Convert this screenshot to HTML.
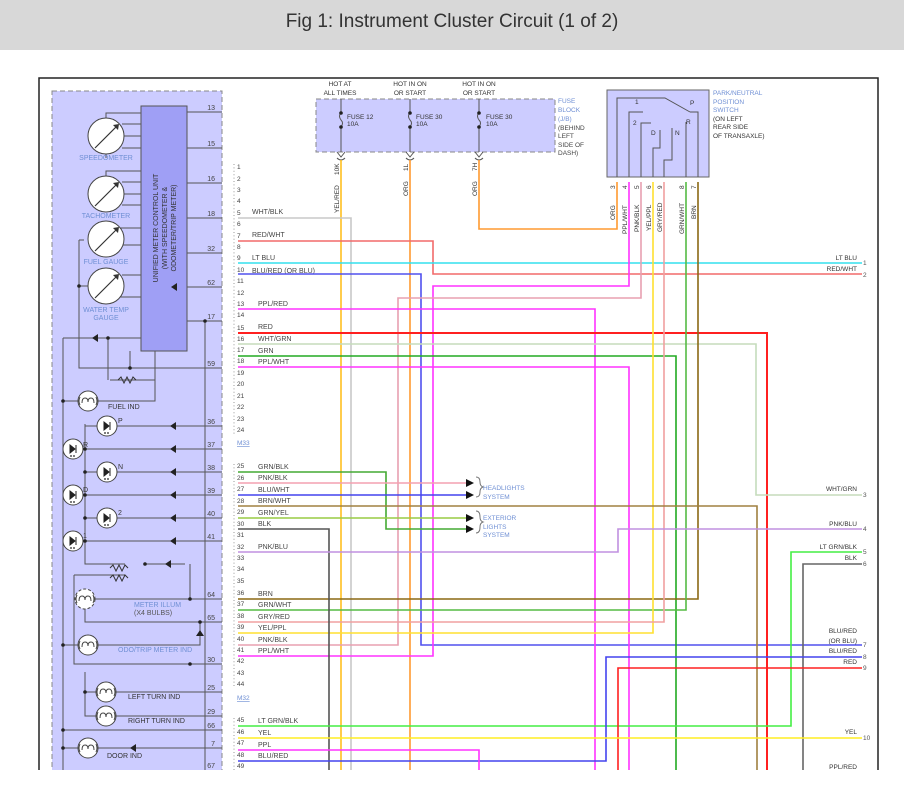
<!DOCTYPE html>
<html><head><meta charset="utf-8">
<style>
html,body{margin:0;padding:0;background:#fff;width:904px;height:797px;overflow:hidden}
.hdr{position:absolute;left:0;top:0;width:904px;height:50px;background:#d8d8d8;font:19px "Liberation Sans",sans-serif;color:#333;text-align:center;line-height:44px}
svg{position:absolute;left:0;top:0}
text{font-family:"Liberation Sans",sans-serif}
</style></head><body>
<div class="hdr">Fig 1: Instrument Cluster Circuit (1 of 2)</div>
<svg width="904" height="797" viewBox="0 0 904 797">
<defs><clipPath id="c"><rect x="0" y="0" width="904" height="770"/></clipPath></defs>
<g clip-path="url(#c)">
<path d="M39 770 V78 H878 V770" fill="none" stroke="#222" stroke-width="1.5"/>
<rect x="52" y="91" width="170" height="700" fill="#ccccff" stroke="#888" stroke-dasharray="5,3"/>
<rect x="141" y="106" width="46" height="245" fill="#9f9ff5" stroke="#555"/>
<text transform="translate(158,228) rotate(-90)" font-size="7" fill="#333" text-anchor="middle">UNIFIED METER CONTROL UNIT</text>
<text transform="translate(167,228) rotate(-90)" font-size="7" fill="#333" text-anchor="middle">(WITH SPEEDOMETER &amp;</text>
<text transform="translate(176,228) rotate(-90)" font-size="7" fill="#333" text-anchor="middle">ODOMETER/TRIP METER)</text>
<g stroke="#555" fill="none" stroke-width="1">
<path d="M187 112 H222 M187 148 H222 M187 183 H222 M187 218 H222 M187 253 H222 M187 287 H222 M187 321 H222 M187 368 H222"/>
<path d="M106 118 V113 H141 M122 124 H141 M124 136 H141 M122 148 H141 M106 154 V158"/>
<path d="M106 176 V171 H141 M122 182 H141 M124 194 H141 M122 205 H141 M110 228 H141 M122 245 H141 M122 275 H141 M110 297 H141"/>
<path d="M79 240 H84 M79 240 V368 H222 M79 286 H88"/>
<path d="M130 351 V368 M155 351 V380 H110 M205 321 V770 M63 338 H141 M63 338 V770"/>
<path d="M108 338 V380"/>
</g>
<g fill="#fff" stroke="#444"><circle cx="106" cy="136" r="18"/><circle cx="106" cy="194" r="18"/><circle cx="106" cy="239" r="18"/><circle cx="106" cy="286" r="18"/></g>
<g stroke="#333" stroke-width="1.2"><path d="M95 148 L117 126 M95 206 L117 184 M95 251 L117 229 M95 298 L117 276"/></g>
<g fill="#333"><path d="M119 124 l-6 1 5 5z M119 182 l-6 1 5 5z M119 227 l-6 1 5 5z M119 274 l-6 1 5 5z"/></g>
<g font-size="7" fill="#6f8fd4" text-anchor="middle"><text x="106" y="160">SPEEDOMETER</text><text x="106" y="218">TACHOMETER</text><text x="106" y="264">FUEL GAUGE</text><text x="106" y="312">WATER TEMP</text><text x="106" y="320">GAUGE</text></g>
<g stroke="#555" fill="none">
<path d="M63 401 H78 M98 401 H155 V380 M85 424 V564 H125 M85 426 H222 M85 449 H222 M85 472 H222 M85 495 H222 M85 518 H222 M85 541 H222"/>
<path d="M74 575 H125 M74 575 V664 H190 M190 564 V599 H222 M145 564 H185 M85 599 H222 M85 599 V622 H222 M200 622 V645 H98 M63 645 H78 M190 664 H222 M85 672 V716 H222 M85 692 H222 M63 730 H222 M63 748 H78 M98 748 H222"/>
</g>
<g fill="#fff" stroke="#444"><circle cx="88" cy="401" r="10"/><circle cx="107" cy="426" r="10"/><circle cx="73" cy="449" r="10"/><circle cx="107" cy="472" r="10"/><circle cx="73" cy="495" r="10"/><circle cx="107" cy="518" r="10"/><circle cx="73" cy="541" r="10"/><circle cx="85" cy="599" r="10" stroke-dasharray="3,2"/><circle cx="88" cy="645" r="10"/><circle cx="106" cy="692" r="10"/><circle cx="106" cy="716" r="10"/><circle cx="88" cy="748" r="10"/></g>
<!-- LED glyphs -->
<g fill="#222" stroke="#222">
<path d="M104 422 l5 4 -5 4z M110 422 v8 M70 445 l5 4 -5 4z M76 445 v8 M104 468 l5 4 -5 4z M110 468 v8 M70 491 l5 4 -5 4z M76 491 v8 M104 514 l5 4 -5 4z M110 514 v8 M70 537 l5 4 -5 4z M76 537 v8" stroke-width="1"/>
</g>
<g fill="#222"><circle cx="105" cy="433" r="0.9"/><circle cx="108" cy="433" r="0.9"/><circle cx="71" cy="456" r="0.9"/><circle cx="74" cy="456" r="0.9"/><circle cx="105" cy="479" r="0.9"/><circle cx="108" cy="479" r="0.9"/><circle cx="71" cy="502" r="0.9"/><circle cx="74" cy="502" r="0.9"/><circle cx="105" cy="525" r="0.9"/><circle cx="108" cy="525" r="0.9"/><circle cx="71" cy="548" r="0.9"/><circle cx="74" cy="548" r="0.9"/></g>
<!-- bulb filaments -->
<g stroke="#444" fill="none">
<path d="M82 403 q0 -5 3 -5 q3 0 3 4 q0 -4 3 -4 q3 0 3 5 M80 397 q-2 4 0 8 M96 397 q2 4 0 8"/>
<path d="M79 601 q0 -5 3 -5 q3 0 3 4 q0 -4 3 -4 q3 0 3 5 M77 595 q-2 4 0 8 M93 595 q2 4 0 8"/>
<path d="M82 647 q0 -5 3 -5 q3 0 3 4 q0 -4 3 -4 q3 0 3 5 M80 641 q-2 4 0 8 M96 641 q2 4 0 8"/>
<path d="M100 694 q0 -5 3 -5 q3 0 3 4 q0 -4 3 -4 q3 0 3 5 M98 688 q-2 4 0 8 M114 688 q2 4 0 8"/>
<path d="M100 718 q0 -5 3 -5 q3 0 3 4 q0 -4 3 -4 q3 0 3 5 M98 712 q-2 4 0 8 M114 712 q2 4 0 8"/>
<path d="M82 750 q0 -5 3 -5 q3 0 3 4 q0 -4 3 -4 q3 0 3 5 M80 744 q-2 4 0 8 M96 744 q2 4 0 8"/>
</g>
<g fill="#222"><path d="M170 426 l6 -4 v8z M170 449 l6 -4 v8z M170 472 l6 -4 v8z M170 495 l6 -4 v8z M170 518 l6 -4 v8z M170 541 l6 -4 v8z M171 287 l6 -4 v8z M92 338 l6 -4 v8z M165 564 l6 -4 v8z M200 630 l-4 6 h8z M130 748 l6 -4 v8z"/>
<circle cx="63" cy="401" r="1.8"/><circle cx="85" cy="449" r="1.8"/><circle cx="85" cy="472" r="1.8"/><circle cx="85" cy="495" r="1.8"/><circle cx="85" cy="518" r="1.8"/><circle cx="85" cy="541" r="1.8"/><circle cx="145" cy="564" r="1.8"/><circle cx="190" cy="599" r="1.8"/><circle cx="200" cy="622" r="1.8"/><circle cx="63" cy="645" r="1.8"/><circle cx="190" cy="664" r="1.8"/><circle cx="85" cy="692" r="1.8"/><circle cx="63" cy="730" r="1.8"/><circle cx="63" cy="748" r="1.8"/><circle cx="79" cy="286" r="1.8"/><circle cx="108" cy="338" r="1.8"/><circle cx="130" cy="368" r="1.8"/><circle cx="205" cy="321" r="1.8"/></g>
<path d="M110 568 l3 -3 3 6 3 -6 3 6 3 -6 3 3 M110 578 l3 -3 3 6 3 -6 3 6 3 -6 3 3 M118 380 l3 -3 3 6 3 -6 3 6 3 -6 3 3" stroke="#333" fill="none"/>
<g font-size="7" fill="#333"><text x="108" y="409">FUEL IND</text><text x="118" y="423">P</text><text x="83" y="447">R</text><text x="118" y="469">N</text><text x="83" y="492">D</text><text x="118" y="515">2</text><text x="83" y="538">1</text><text x="128" y="699">LEFT TURN IND</text><text x="128" y="723">RIGHT TURN IND</text><text x="107" y="758">DOOR IND</text></g>
<g font-size="7" fill="#6f8fd4"><text x="134" y="607">METER ILLUM</text><text x="134" y="615" fill="#555">(X4 BULBS)</text><text x="118" y="652">ODO/TRIP METER IND</text></g>
<g font-size="7" fill="#444" text-anchor="end"><text x="215" y="110">13</text><text x="215" y="146">15</text><text x="215" y="181">16</text><text x="215" y="216">18</text><text x="215" y="251">32</text><text x="215" y="285">62</text><text x="215" y="319">17</text><text x="215" y="366">59</text><text x="215" y="424">36</text><text x="215" y="447">37</text><text x="215" y="470">38</text><text x="215" y="493">39</text><text x="215" y="516">40</text><text x="215" y="539">41</text><text x="215" y="597">64</text><text x="215" y="620">65</text><text x="215" y="662">30</text><text x="215" y="690">25</text><text x="215" y="714">29</text><text x="215" y="728">66</text><text x="215" y="746">7</text><text x="215" y="768">67</text></g>
<g font-size="6.5" fill="#444">
<text x="237" y="169">1</text><text x="237" y="181">2</text><text x="237" y="192">3</text><text x="237" y="203">4</text><text x="237" y="215">5</text><text x="237" y="226">6</text><text x="237" y="238">7</text><text x="237" y="249">8</text><text x="237" y="260">9</text><text x="237" y="272">10</text><text x="237" y="283">11</text><text x="237" y="295">12</text><text x="237" y="306">13</text><text x="237" y="317">14</text><text x="237" y="330">15</text><text x="237" y="341">16</text><text x="237" y="352">17</text><text x="237" y="363">18</text><text x="237" y="375">19</text><text x="237" y="386">20</text><text x="237" y="398">21</text><text x="237" y="409">22</text><text x="237" y="421">23</text><text x="237" y="432">24</text>
<text x="237" y="468">25</text><text x="237" y="480">26</text><text x="237" y="491">27</text><text x="237" y="503">28</text><text x="237" y="514">29</text><text x="237" y="526">30</text><text x="237" y="537">31</text><text x="237" y="549">32</text><text x="237" y="560">33</text><text x="237" y="571">34</text><text x="237" y="583">35</text><text x="237" y="595">36</text><text x="237" y="606">37</text><text x="237" y="618">38</text><text x="237" y="629">39</text><text x="237" y="641">40</text><text x="237" y="652">41</text><text x="237" y="663">42</text><text x="237" y="675">43</text><text x="237" y="686">44</text>
<text x="237" y="722">45</text><text x="237" y="734">46</text><text x="237" y="745">47</text><text x="237" y="757">48</text><text x="237" y="768">49</text>
</g>
<g font-size="6.5" fill="#6f8fd4" text-decoration="underline"><text x="237" y="445">M33</text><text x="237" y="700">M32</text></g>
<path d="M234 164 V434 M234 464 V688 M234 718 V770" stroke="#999" stroke-dasharray="1,2.4"/>
<g font-size="7" fill="#444">
<text x="252" y="214">WHT/BLK</text><text x="252" y="237">RED/WHT</text><text x="252" y="260">LT BLU</text><text x="252" y="273">BLU/RED (OR BLU)</text><text x="258" y="306">PPL/RED</text><text x="258" y="329">RED</text><text x="258" y="341">WHT/GRN</text><text x="258" y="353">GRN</text><text x="258" y="364">PPL/WHT</text>
<text x="258" y="469">GRN/BLK</text><text x="258" y="480">PNK/BLK</text><text x="258" y="492">BLU/WHT</text><text x="258" y="503">BRN/WHT</text><text x="258" y="515">GRN/YEL</text><text x="258" y="526">BLK</text><text x="258" y="549">PNK/BLU</text><text x="258" y="596">BRN</text><text x="258" y="607">GRN/WHT</text><text x="258" y="619">GRY/RED</text><text x="258" y="630">YEL/PPL</text><text x="258" y="642">PNK/BLK</text><text x="258" y="653">PPL/WHT</text>
<text x="258" y="723">LT GRN/BLK</text><text x="258" y="735">YEL</text><text x="258" y="747">PPL</text><text x="258" y="758">BLU/RED</text>
</g>
<rect x="316" y="99" width="239" height="53" fill="#ccccff" stroke="#888" stroke-dasharray="5,3"/>
<g font-size="6.5" fill="#333" text-anchor="middle"><text x="340" y="86">HOT AT</text><text x="340" y="95">ALL TIMES</text><text x="410" y="86">HOT IN ON</text><text x="410" y="95">OR START</text><text x="479" y="86">HOT IN ON</text><text x="479" y="95">OR START</text></g>
<g stroke="#555" fill="none"><path d="M341 99 V113 M341 127 V152 M410 99 V113 M410 127 V152 M479 99 V113 M479 127 V152 M341 113 q-3 3 0 7 q3 3 0 7 M410 113 q-3 3 0 7 q3 3 0 7 M479 113 q-3 3 0 7 q3 3 0 7"/><path d="M337 152 l4 5 4-5 M406 152 l4 5 4-5 M475 152 l4 5 4-5 M337 158 q4 4 8 0 M406 158 q4 4 8 0 M475 158 q4 4 8 0"/></g>
<g fill="#222"><circle cx="341" cy="113" r="1.8"/><circle cx="341" cy="127" r="1.8"/><circle cx="410" cy="113" r="1.8"/><circle cx="410" cy="127" r="1.8"/><circle cx="479" cy="113" r="1.8"/><circle cx="479" cy="127" r="1.8"/></g>
<g font-size="6.5" fill="#333"><text x="347" y="119">FUSE 12</text><text x="347" y="126">10A</text><text x="416" y="119">FUSE 30</text><text x="416" y="126">10A</text><text x="486" y="119">FUSE 30</text><text x="486" y="126">10A</text></g>
<g font-size="6.5" fill="#6f8fd4"><text x="558" y="103">FUSE</text><text x="558" y="112">BLOCK</text><text x="558" y="121">(J/B)</text><text x="558" y="130" fill="#444">(BEHIND</text><text x="558" y="138" fill="#444">LEFT</text><text x="558" y="147" fill="#444">SIDE OF</text><text x="558" y="155" fill="#444">DASH)</text></g>
<rect x="607" y="90" width="102" height="87" fill="#ccccff" stroke="#666"/>
<g stroke="#555" fill="none"><path d="M617 177 V98 H665 L690 112 M629 177 V112 H643 M641 177 V123 H651 M653 177 V148 H660 V130 M664 177 V160 H672 V128 M686 177 V122 M698 177 V112 H690"/></g>
<g font-size="6.5" fill="#333"><text x="635" y="104">1</text><text x="633" y="125">2</text><text x="651" y="135">D</text><text x="675" y="135">N</text><text x="690" y="105">P</text><text x="686" y="124">R</text></g>
<g font-size="6.5" fill="#6f8fd4"><text x="713" y="95">PARK/NEUTRAL</text><text x="713" y="104">POSITION</text><text x="713" y="112">SWITCH</text><text x="713" y="121" fill="#333">(ON LEFT</text><text x="713" y="129" fill="#333">REAR SIDE</text><text x="713" y="138" fill="#333">OF TRANSAXLE)</text></g>
<g font-size="6.5" fill="#333"><text transform="translate(615,189) rotate(-90)">3</text><text transform="translate(627,189) rotate(-90)">4</text><text transform="translate(639,189) rotate(-90)">5</text><text transform="translate(651,189) rotate(-90)">6</text><text transform="translate(662,189) rotate(-90)">9</text><text transform="translate(684,189) rotate(-90)">8</text><text transform="translate(696,189) rotate(-90)">7</text>
<text transform="translate(615,220) rotate(-90)">ORG</text><text transform="translate(627,234) rotate(-90)">PPL/WHT</text><text transform="translate(639,232) rotate(-90)">PNK/BLK</text><text transform="translate(651,231) rotate(-90)">YEL/PPL</text><text transform="translate(662,232) rotate(-90)">GRY/RED</text><text transform="translate(684,234) rotate(-90)">GRN/WHT</text><text transform="translate(696,219) rotate(-90)">BRN</text>
<text transform="translate(339,213) rotate(-90)">YEL/RED</text><text transform="translate(339,175) rotate(-90)">10K</text><text transform="translate(408,196) rotate(-90)">ORG</text><text transform="translate(408,171) rotate(-90)">1L</text><text transform="translate(477,196) rotate(-90)">ORG</text><text transform="translate(477,171) rotate(-90)">7H</text></g>
<g fill="none" stroke-width="1.6">
<path d="M341 160 V770" stroke="#ffc020"/>
<path d="M410 160 V770" stroke="#ff9a30"/>
<path d="M479 160 V229 H617 V182" stroke="#ff9a30"/>
<path d="M238 218 H351 V770" stroke="#c8c8c8"/>
<path d="M238 241 H433 V274 H862" stroke="#f26a6a"/>
<path d="M238 263 H862" stroke="#33e0ee"/>
<path d="M238 274 H421 V645 H862" stroke="#5050ee"/>
<path d="M629 182 V286 H433 V656 H238" stroke="#ff33ff"/>
<path d="M641 182 V298 H398 V645 H238" stroke="#e8a0b0"/>
<path d="M238 309 H595 V770" stroke="#ff33ff"/>
<path d="M238 333 H767 V770" stroke="#ff2020" stroke-width="2"/>
<path d="M238 344 H756 V495 H862" stroke="#c5dcbc"/>
<path d="M238 356 H676 V770" stroke="#22aa22"/>
<path d="M238 367 H629 V770" stroke="#ff33ff"/>
<path d="M698 182 V599 H238" stroke="#8b6914"/>
<path d="M686 182 V610 H238" stroke="#55bb44"/>
<path d="M653 182 V633 H238" stroke="#ffe030"/>
<path d="M664 182 V622 H238" stroke="#f0a0a0"/>
<path d="M238 472 H386 V529 H466" stroke="#44aa33"/>
<path d="M238 483 H466" stroke="#f4a0b0"/>
<path d="M238 495 H466" stroke="#4444ee"/>
<path d="M238 506 H757 V770" stroke="#a08040"/>
<path d="M238 518 H466" stroke="#99cc44"/>
<path d="M238 529 H329 V770" stroke="#555"/>
<path d="M238 552 H618 V529 H862" stroke="#c090e0"/>
<path d="M238 726 H791 V552 H862" stroke="#44ee44"/>
<path d="M862 564 H803 V770" stroke="#666"/>
<path d="M862 657 H606 V761 H238" stroke="#4444ee"/>
<path d="M862 668 H618 V770" stroke="#ff2020"/>
<path d="M238 738 H862" stroke="#ffee22"/>
<path d="M238 750 H479 V770" stroke="#ff33ff"/>
</g>
<g fill="#111"><path d="M466 479 l8 4 -8 4z M466 491 l8 4 -8 4z M466 514 l8 4 -8 4z M466 525 l8 4 -8 4z"/></g>
<path d="M476 477 q4 0 4 5 q0 4 3 5 q-3 1 -3 5 q0 5 -4 5 M476 511 q4 0 4 6 q0 4 3 5 q-3 1 -3 5 q0 6 -4 6" stroke="#777" fill="none"/>
<g font-size="6.5" fill="#6f8fd4"><text x="483" y="490">HEADLIGHTS</text><text x="483" y="499">SYSTEM</text><text x="483" y="520">EXTERIOR</text><text x="483" y="529">LIGHTS</text><text x="483" y="537">SYSTEM</text></g>
<g font-size="6.5" fill="#333" text-anchor="end"><text x="857" y="260">LT BLU</text><text x="857" y="271">RED/WHT</text><text x="857" y="491">WHT/GRN</text><text x="857" y="526">PNK/BLU</text><text x="857" y="549">LT GRN/BLK</text><text x="857" y="560">BLK</text><text x="857" y="633">BLU/RED</text><text x="857" y="643">(OR BLU)</text><text x="857" y="653">BLU/RED</text><text x="857" y="664">RED</text><text x="857" y="734">YEL</text><text x="857" y="769">PPL/RED</text></g>
<g font-size="6.5" fill="#555"><text x="863" y="265">1</text><text x="863" y="277">2</text><text x="863" y="497">3</text><text x="863" y="531">4</text><text x="863" y="554">5</text><text x="863" y="566">6</text><text x="863" y="647">7</text><text x="863" y="659">8</text><text x="863" y="670">9</text><text x="863" y="740">10</text></g>
</g>
</svg>
</body></html>
